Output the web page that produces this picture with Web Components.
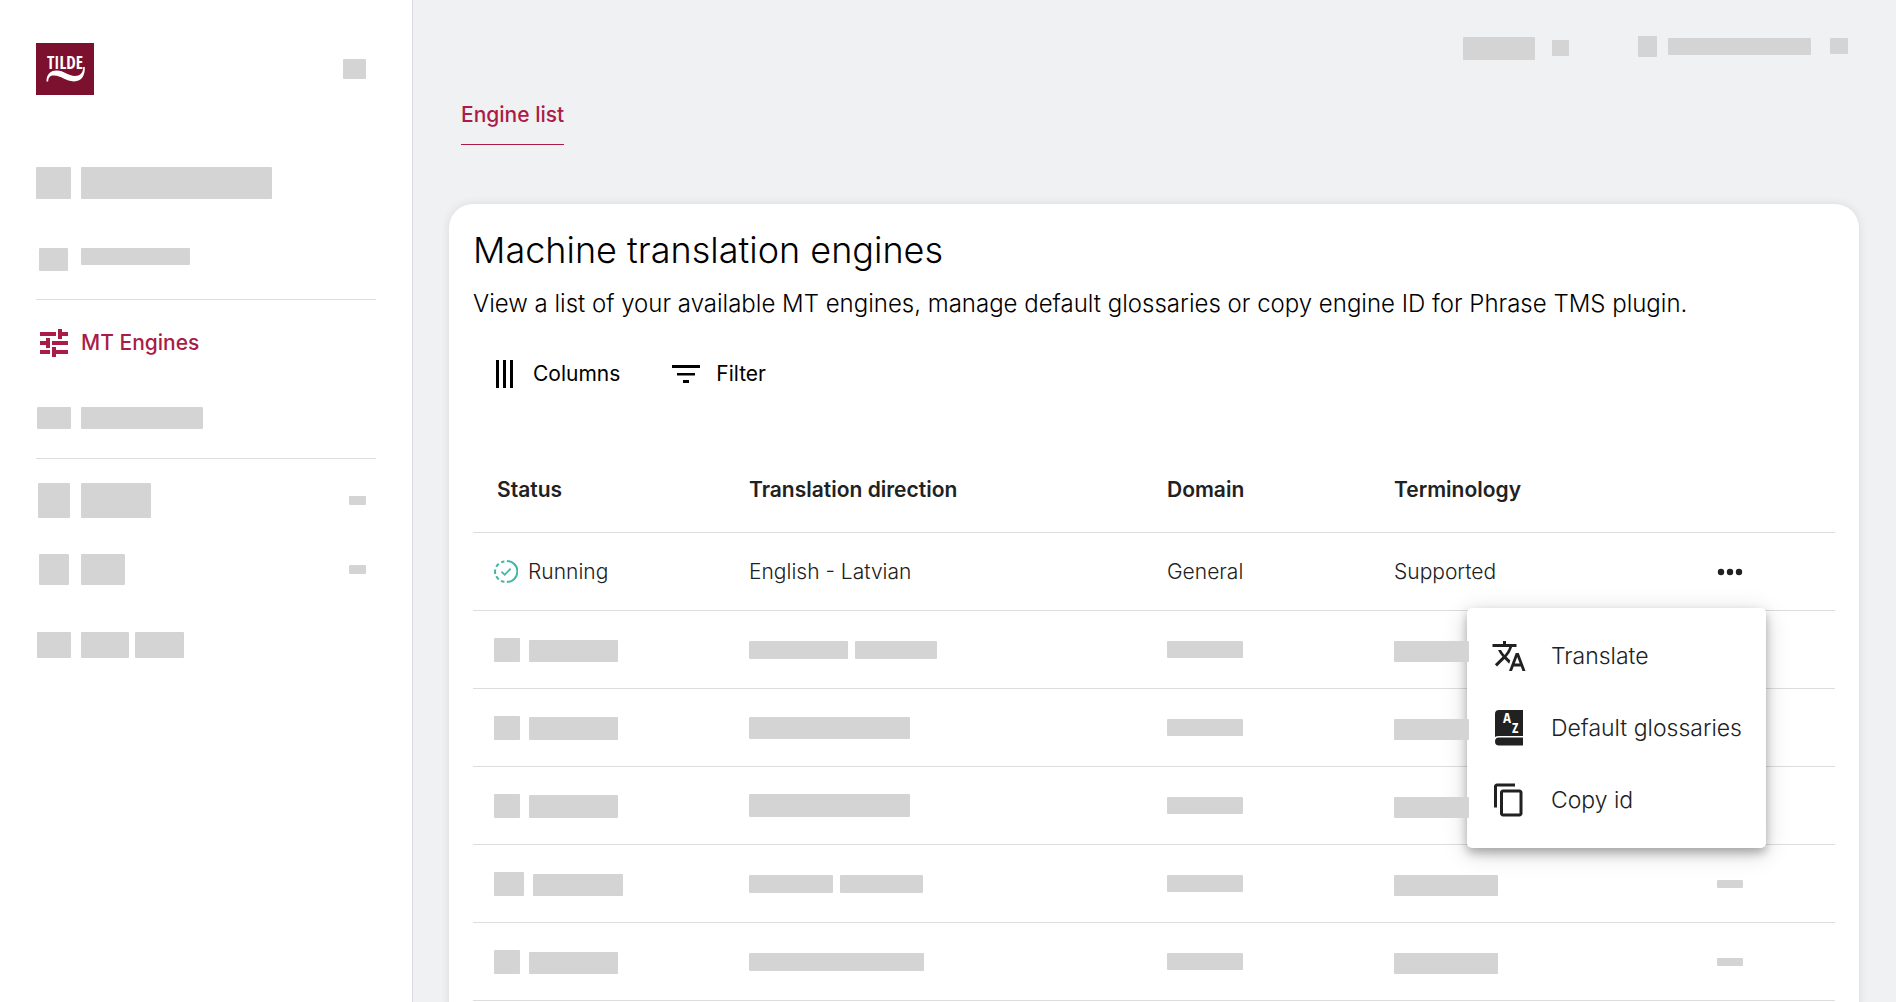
<!DOCTYPE html>
<html lang="en">
<head>
<meta charset="utf-8">
<title>Machine translation engines</title>
<style>
  :root {
    --accent: #aa1c47;
    --skeleton: #d4d4d4;
    --line: #dcdde0;
    --ink: #212121;
  }
  html, body { margin: 0; height: 100%; }
  body { font-family: Inter, "Liberation Sans", sans-serif; font-size: 21px; line-height: 24px; color: var(--ink); background: #f0f1f3; }
</style>
</head>
<body>
<app-shell>
  <side-nav slot="nav"></side-nav>
  <top-bar slot="top"></top-bar>
  <tab-link href="#engines">Engine list</tab-link>
  <content-card heading="Machine translation engines">
    <span slot="intro">View a list of your available MT engines, manage default glossaries or copy engine ID for Phrase TMS plugin.</span>
    <tool-button slot="tools" icon="columns">Columns</tool-button>
    <tool-button slot="tools" icon="filter">Filter</tool-button>
    <engine-table></engine-table>
  </content-card>
</app-shell>

<script>
const define = (name, html) => {
  const template = document.createElement('template');
  customElements.define(name, class extends HTMLElement {
    connectedCallback() {
      if (this.shadowRoot) return;
      template.innerHTML = typeof html === 'function' ? html(this) : html;
      this.attachShadow({ mode: 'open' }).append(template.content.cloneNode(true));
    }
  });
};

const condensed = `font-family="'Liberation Sans Narrow','Open Sans Condensed','Roboto Condensed','Liberation Sans',sans-serif" font-weight="700"`;
const icons = {
  logo: [58, 52, `<rect width="58" height="52" fill="#7b112e"/>
    <text x="11" y="26" ${condensed} font-size="17" fill="#fff">TILDE</text>
    <path fill="#fff" d="M10.5 38C10.5 32 14 27.6 20.5 27.6C28 27.6 32 33 39 33C44 33 47.2 30 47.2 24H48.8C49.2 32 46 38.4 38 38.4C30 38.4 25 32.6 18 32.6C14 32.6 12.4 34.5 12.2 38.6H10.5Z"/>`, '0 0 58 52'],
  tune: [28, 28, `<path fill="currentColor" d="M0 3H16V7H0ZM18 0H22V3H28V7H22V10H18ZM0 12H6V9H10V19H6V16H0ZM12 12H28V16H12ZM0 21H10V25H0ZM12 18H16V21H28V25H16V28H12Z"/>`, '0 0 28 28'],
  columns: [20, 28, `<path stroke="#000" stroke-width="3" d="M2.5 0V28M9.5 0V28M16.5 0V28"/>`, '0 0 20 28'],
  filter: [28, 18, `<path fill="#000" d="M0 0H28V3H0ZM5 8H23V10.5H5ZM11 15H17V18H11Z"/>`, '0 0 28 18'],
  running: [24, 24, `<g fill="none" stroke="#3cb8a4" stroke-width="2">
    <path d="M12.9 1A10.5 10.5 0 0 1 12.900 22"/>
    <path d="M10.4 1.4A10.5 10.5 0 0 0 7.2 2.300M4.700 3.800A10.5 10.5 0 0 0 2.300 6.900M1.300 9.400A10.5 10.5 0 0 0 1.300 14M2.300 16.300A10.5 10.5 0 0 0 4.700 19.400M7 20.800A10.5 10.5 0 0 0 10.400 21.800"/>
    <path stroke-width="1.8" d="M7.500 11.600L10.700 14.800L16.600 8.600"/></g>`, '0 0 24 24'],
  more: [26, 8, `<g fill="#212121"><circle cx="4" cy="4" r="3.2"/><circle cx="13" cy="4" r="3.2"/><circle cx="22" cy="4" r="3.2"/></g>`, '0 0 26 8'],
  translate: [36, 36, `<path fill="#212121" d="M12.87 15.07l-2.54-2.51.03-.03c1.74-1.94 2.98-4.17 3.71-6.53H17V4h-7V2H8v2H1v1.99h11.17C11.5 7.92 10.44 9.75 9 11.35 8.07 10.32 7.3 9.19 6.69 8h-2c.73 1.63 1.73 3.17 2.98 4.56l-5.09 5.02L4 19l5-5 3.11 3.11.76-2.04zM18.5 10h-2L12 22h2l1.12-3h4.75L21 22h2l-4.5-12zm-2.62 7l1.62-4.33L19.12 17h-3.24z"/>`, '0 0 24 24'],
  glossary: [36, 44, `<path fill="#212121" d="M8 0H32V26H8Q5.5 26 4 27V4Q4 0 8 0ZM8 27.5H32V35.5H8A4 4 0 0 1 8 27.5Z"/>
    <g fill="#fff" ${condensed} font-size="15"><text x="12" y="13">A</text><text x="21" y="23">Z</text></g>`, '0 -4 36 44'],
  copy: [36, 36, `<path fill="#212121" d="M16 1H4c-1.1 0-2 .9-2 2v14h2V3h12V1zm3 4H8c-1.1 0-2 .9-2 2v14c0 1.1.9 2 2 2h11c1.1 0 2-.9 2-2V7c0-1.1-.9-2-2-2zm0 16H8V7h11v14z"/>`, '0 0 24 24'],
};

define('ui-icon', el => {
  const [w, h, body, box] = icons[el.getAttribute('name')];
  return `<style>:host{display:block;flex:none}svg{display:block}</style>
    <svg width="${w}" height="${h}" viewBox="${box}" aria-hidden="true">${body}</svg>`;
});

/* Grey placeholder block; size="WxH" */
define('skel-bar', el => {
  const [w, h] = el.getAttribute('size').split('x');
  return `<style>:host{display:block;flex:none;width:${w}px;height:${h}px;border-radius:1px;background:var(--skeleton)}</style>`;
});

define('app-shell', `
  <style>
    :host { display: grid; grid-template-columns: 413px minmax(0, 1fr); height: 100vh; }
    aside { box-sizing: border-box; background: #fff; border-right: 1px solid var(--line); }
    main { overflow-y: auto; scrollbar-width: none; padding: 0 37px 40px 36px; }
  </style>
  <aside><slot name="nav"></slot></aside>
  <main><slot name="top"></slot><slot></slot></main>`);

define('nav-item', `
  <style>
    :host { display: flex; align-items: center; height: var(--row, 76px); }
    a { display: flex; flex: 1; align-items: center; gap: 10px; color: var(--accent); font-weight: 500; text-decoration: none; }
    .icon { display: flex; width: 35px; justify-content: center; }
    .label { display: flex; flex: 1; gap: 6px; }
    :host([top]) a { align-items: flex-start; }
    .end { margin-right: 10px; }
  </style>
  <a href="#"><span class="icon"><slot name="icon"></slot></span><span class="label"><slot></slot></span><span class="end"><slot name="end"></slot></span></a>`);

define('side-nav', `
  <style>
    :host { display: block; padding: 43px 36px 0; }
    header { display: flex; align-items: center; justify-content: space-between; padding: 0 10px 50px 0; }
    .group { padding: 0 0 2px; }
    .group + .group { --row: 75px; border-top: 1px solid var(--line); padding: 5px 0 3px; }
    .group + .compact { --row: 69px; padding-top: 7px; }
    .foot { --row: 76px; }
  </style>
  <header><ui-icon name="logo"></ui-icon><skel-bar size="23x20"></skel-bar></header>
  <nav>
    <div class="group">
      <nav-item><skel-bar slot="icon" size="35x32"></skel-bar><skel-bar size="191x32"></skel-bar></nav-item>
      <nav-item top><skel-bar slot="icon" size="29x23"></skel-bar><skel-bar size="109x17"></skel-bar></nav-item>
    </div>
    <div class="group">
      <nav-item><ui-icon slot="icon" name="tune"></ui-icon>MT Engines</nav-item>
      <nav-item><skel-bar slot="icon" size="34x22"></skel-bar><skel-bar size="122x22"></skel-bar></nav-item>
    </div>
    <div class="group compact">
      <nav-item><skel-bar slot="icon" size="32x35"></skel-bar><skel-bar size="70x35"></skel-bar><skel-bar slot="end" size="17x9"></skel-bar></nav-item>
      <nav-item><skel-bar slot="icon" size="30x31"></skel-bar><skel-bar size="44x31"></skel-bar><skel-bar slot="end" size="17x9"></skel-bar></nav-item>
    </div>
    <nav-item class="foot"><skel-bar slot="icon" size="34x26"></skel-bar><skel-bar size="48x26"></skel-bar><skel-bar size="49x26"></skel-bar></nav-item>
  </nav>`);

define('top-bar', `
  <style>
    :host { display: flex; justify-content: flex-end; gap: 69px; padding: 35px 11px 0 0; height: 61px; box-sizing: border-box; }
    div { display: flex; align-items: center; }
    .lang { gap: 17px; }
    .user { gap: 11px; height: 22px; }
    .user :last-child { margin-left: 8px; }
  </style>
  <div class="lang"><skel-bar size="72x23"></skel-bar><skel-bar size="17x16"></skel-bar></div>
  <div class="user"><skel-bar size="19x21"></skel-bar><skel-bar size="143x17"></skel-bar><skel-bar size="18x16"></skel-bar></div>`);

define('tab-link', el => `
  <style>
    :host { display: block; padding: 42px 12px 59px; }
    a { display: inline-block; padding-bottom: 17px; border-bottom: 1px solid var(--accent); color: var(--accent); font-weight: 500; text-decoration: none; vertical-align: top; }
  </style>
  <a href="${el.getAttribute('href')}"><slot></slot></a>`);

define('tool-button', el => `
  <style>
    :host { display: block; }
    button { display: flex; align-items: center; gap: 16px; height: 40px; padding: 0; border: 0; background: none; font: inherit; color: #000; }
    ui-icon { min-width: 24px; display: flex; justify-content: center; }
  </style>
  <button type="button"><ui-icon name="${el.getAttribute('icon')}"></ui-icon><slot></slot></button>`);

define('content-card', el => `
  <style>
    :host { display: block; background: #fff; border-radius: 24px; padding: 24px; box-shadow: 0 0 10px rgba(0, 0, 0, .1); }
    h1 { margin: 0; font-size: 36px; line-height: 44px; font-weight: 300; color: #000; }
    p { margin: 16px 0 0; font-size: 24px; line-height: 32px; font-weight: 300; color: #000; }
    .tools { display: flex; gap: 52px; padding: 34px 20px 54px; }
  </style>
  <h1>${el.getAttribute('heading')}</h1>
  <p><slot name="intro"></slot></p>
  <div class="tools"><slot name="tools"></slot></div>
  <slot></slot>`);

define('menu-item', el => `
  <style>
    :host { display: block; }
    button { display: flex; align-items: center; gap: 24px; width: 100%; height: 72px; padding: 0 24px; border: 0; background: none; font: inherit; color: inherit; white-space: nowrap; }
  </style>
  <button type="button" role="menuitem"><ui-icon name="${el.getAttribute('icon')}"></ui-icon><slot></slot></button>`);

define('action-menu', `
  <style>
    :host { display: inline-block; position: relative; vertical-align: top; }
    .more { display: flex; align-items: center; justify-content: center; width: 72px; height: 72px; padding: 0; border: 0; background: none; }
    .menu { position: absolute; z-index: 1; top: 100%; right: 0; padding: 12px 0; border-radius: 5px; background: #fff; color: var(--ink); font-size: 23px; line-height: 32px; font-weight: 300;
      box-shadow: 0 5px 10px rgba(0,0,0,.26), 0 5px 24px rgba(0,0,0,.18); }
  </style>
  <button class="more" type="button" aria-label="Actions"><ui-icon name="more"></ui-icon></button>
  <div class="menu" role="menu"><slot></slot></div>`);

const rows = [
  { status: ['26x24', '89x22'], dir: ['99x18', '82x18'], term: '75x21' },
  { status: ['26x24', '89x23'], dir: ['161x22'], term: '75x21' },
  { status: ['26x24', '89x23'], dir: ['161x23'], term: '75x21' },
  { status: ['30x24', '90x22'], dir: ['84x18', '83x18'], term: '104x21', end: '26x8' },
  { status: ['26x24', '89x22'], dir: ['175x18'], term: '104x21', end: '26x8' },
];
const bars = list => list.map(s => `<skel-bar size="${s}"></skel-bar>`).join('');

define('engine-table', `
  <style>
    :host { display: block; }
    table { width: 100%; table-layout: fixed; border-collapse: separate; border-spacing: 0; }
    th, td { box-sizing: border-box; height: 78px; padding: 0 0 0 24px; border-bottom: 1px solid var(--line); text-align: left; vertical-align: middle; font-weight: 300; }
    th { height: 85px; font-weight: 600; }
    .c1 { width: 252px; } .c3 { width: 227px; } .c4 { width: 255px; } .c5 { width: 210px; }
    td:first-child { padding-left: 21px; }
    td:last-child { padding: 0; text-align: center; }
    .pair { display: flex; align-items: flex-end; gap: 9px; }
    .dir { gap: 7px; }
    .state { display: flex; align-items: center; gap: 10px; }
    .term { position: relative; z-index: 2; padding-top: 4px; }
    .end { display: flex; justify-content: center; }
  </style>
  <table>
    <colgroup><col class="c1"><col><col class="c3"><col class="c4"><col class="c5"></colgroup>
    <thead><tr><th>Status</th><th>Translation direction</th><th>Domain</th><th>Terminology</th><th aria-label="Actions"></th></tr></thead>
    <tbody>
      <tr>
        <td><div class="state"><ui-icon name="running"></ui-icon>Running</div></td>
        <td>English - Latvian</td><td>General</td><td>Supported</td>
        <td><action-menu>
          <menu-item icon="translate">Translate</menu-item>
          <menu-item icon="glossary">Default glossaries</menu-item>
          <menu-item icon="copy">Copy id</menu-item>
        </action-menu></td>
      </tr>
      ${rows.map(r => `<tr>
        <td><div class="pair">${bars(r.status)}</div></td>
        <td><div class="pair dir">${bars(r.dir)}</div></td>
        <td>${bars(['76x17'])}</td>
        <td><div class="term">${bars([r.term])}</div></td>
        <td><div class="end">${r.end ? bars([r.end]) : ''}</div></td>
      </tr>`).join('')}
    </tbody>
  </table>`);
</script>
</body>
</html>
